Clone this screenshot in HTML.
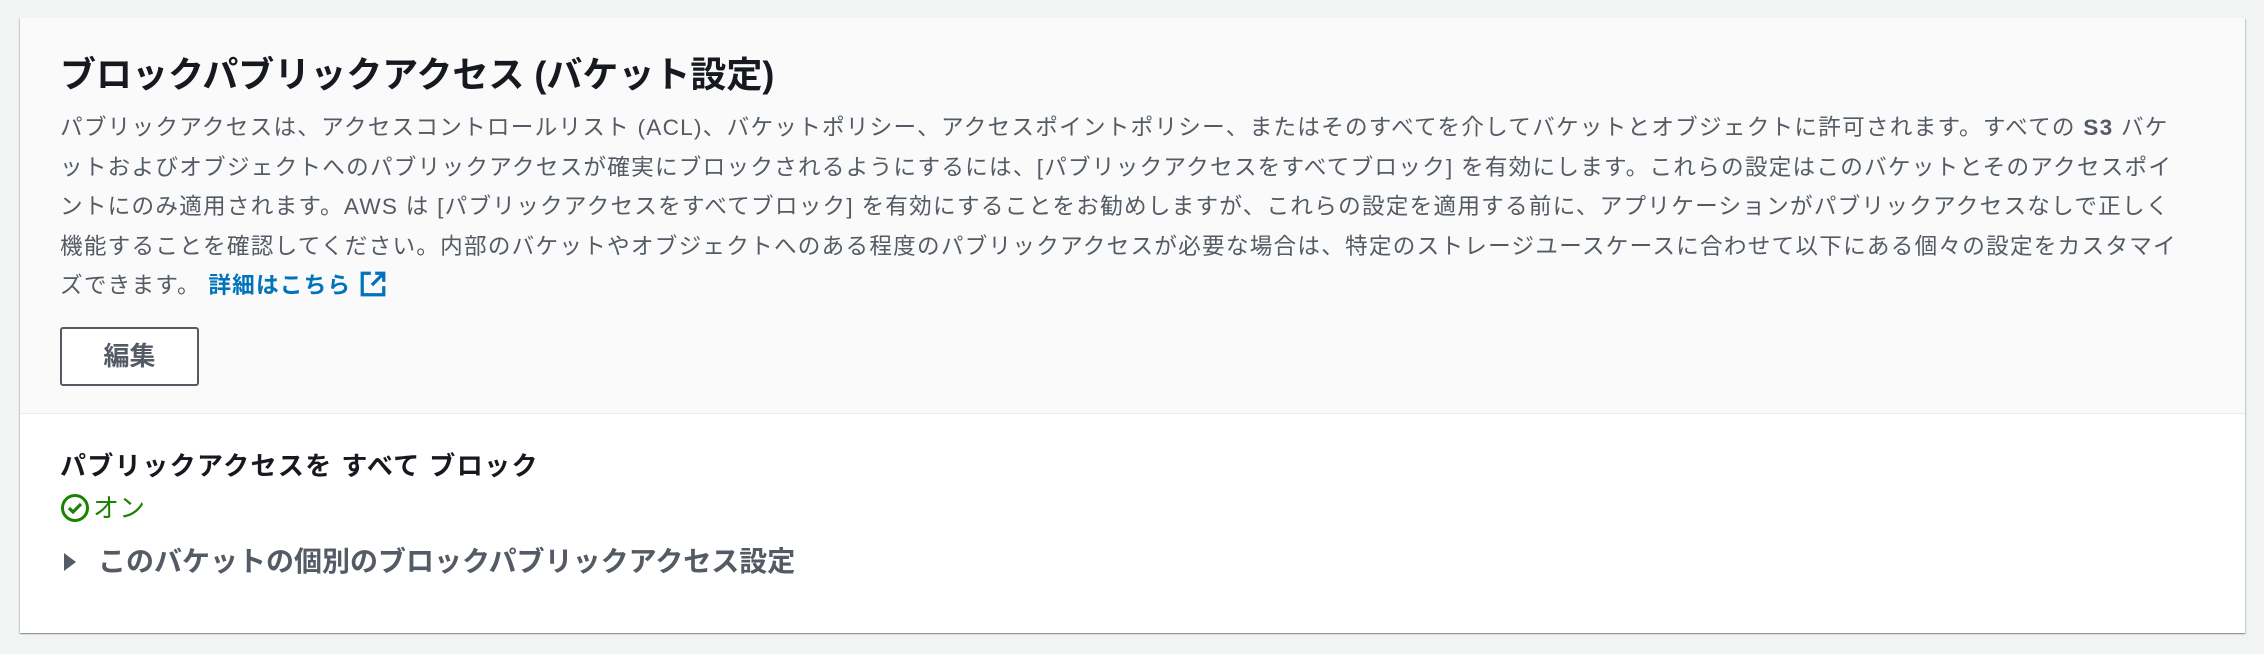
<!DOCTYPE html>
<html><head><meta charset="utf-8"><style>
*{margin:0;padding:0;box-sizing:border-box}
body{width:2264px;height:654px;background:#f2f3f3;font-family:"Liberation Sans","Noto Sans CJK JP",sans-serif;position:relative;overflow:hidden}
.card{position:absolute;left:20px;top:18px;width:2225px;height:615px;background:#fff;box-shadow:0 1px 1px rgba(0,28,36,.3),1px 1px 1px rgba(0,28,36,.15),-1px 1px 1px rgba(0,28,36,.15)}
.top{position:absolute;left:0;top:0;width:100%;height:396px;background:#fafafa;border-bottom:1px solid #eaeded}
.abs{position:absolute;white-space:nowrap}
h1{font-size:36px;font-weight:bold;color:#16191f;left:40px;top:33px;line-height:48px}
.body{left:40px;top:90px;font-size:22.6px;color:#545b64;line-height:39.6px;letter-spacing:1.25px}
.body b{color:#545b64}
a{color:#0073bb;font-weight:bold;text-decoration:none}
.btn{left:40px;top:309px;width:139px;height:59px;border:2px solid #545b64;border-radius:3px;background:#fff;font-size:26px;font-weight:bold;color:#545b64;text-align:center;line-height:55px}
.h2{left:40px;top:430px;font-size:26px;font-weight:bold;color:#16191f;line-height:36px;letter-spacing:1.4px}
.on{left:40px;top:472px;font-size:26px;color:#1d8102;line-height:36px}
.exp{left:40px;top:526px;font-size:28px;font-weight:bold;color:#545b64;line-height:36px}
</style></head><body>
<div class="card">
<div class="top"></div>
<h1 class="abs">ブロックパブリックアクセス (バケット設定)</h1>
<div class="abs body">パブリックアクセスは、アクセスコントロールリスト (ACL)、バケットポリシー、アクセスポイントポリシー、またはそのすべてを介してバケットとオブジェクトに許可されます。すべての <b>S3</b> バケ<br>ットおよびオブジェクトへのパブリックアクセスが確実にブロックされるようにするには、[パブリックアクセスをすべてブロック] を有効にします。これらの設定はこのバケットとそのアクセスポイ<br>ントにのみ適用されます。AWS は [パブリックアクセスをすべてブロック] を有効にすることをお勧めしますが、これらの設定を適用する前に、アプリケーションがパブリックアクセスなしで正しく<br>機能することを確認してください。内部のバケットやオブジェクトへのある程度のパブリックアクセスが必要な場合は、特定のストレージユースケースに合わせて以下にある個々の設定をカスタマイ<br>ズできます。 <a>詳細はこちら <svg width="28" height="28" viewBox="0 0 26 26" style="vertical-align:-5px"><path d="M11 3H3v20h20v-8" fill="none" stroke="#0073bb" stroke-width="3"/><path d="M15 3h8v8M23 3L12 14" fill="none" stroke="#0073bb" stroke-width="3"/></svg></a></div>
<div class="abs btn">編集</div>
<div class="abs h2">パブリックアクセスを すべて ブロック</div>
<div class="abs on"><svg width="30" height="30" viewBox="0 0 30 30" style="vertical-align:-6px;margin-right:3px"><circle cx="15" cy="15" r="12.5" fill="none" stroke="#1d8102" stroke-width="3"/><path d="M9 15l4 4 8-8" fill="none" stroke="#1d8102" stroke-width="3.2"/></svg>オン</div>
<div class="abs exp"><svg width="18" height="22" viewBox="0 0 18 22" style="vertical-align:-2px;margin-right:18px;margin-left:2px"><path d="M2 2l12 9-12 9z" fill="#545b64"/></svg>このバケットの個別のブロックパブリックアクセス設定</div>
</div>
</body></html>
